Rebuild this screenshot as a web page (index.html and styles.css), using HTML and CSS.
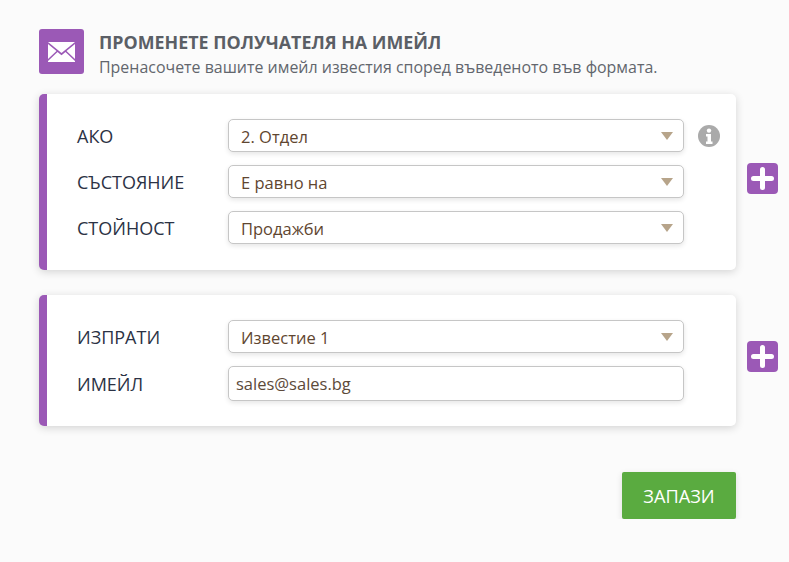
FILE: index.html
```html
<!DOCTYPE html>
<html lang="bg">
<head>
    <meta charset="UTF-8">
    <title>Промените получателя на имейл</title>
    <link rel="stylesheet" href="styles.css">
</head>
<body>
    <div class="container">
        <div class="header">
            <div class="header-icon">
                <svg width="27" height="20" viewBox="0 0 27 20">
                    <path fill="#fff" d="M0 0h27L13.5 11z"/>
                    <path fill="#fff" d="M0 2v15l8.5-8zM27 2v15l-8.5-8z"/>
                    <path fill="#fff" d="M0 20h27v-1l-9.5-9-4 3.3-4-3.3L0 19z"/>
                </svg>
            </div>
            <div>
                <h1>ПРОМЕНЕТЕ ПОЛУЧАТЕЛЯ НА ИМЕЙЛ</h1>
                <p>Пренасочете вашите имейл известия според въведеното във формата.</p>
            </div>
        </div>

        <div class="block">
            <div class="card">
                <div class="row">
                    <label>АКО</label>
                    <div class="select">2. Отдел</div>
                    <div class="info">
                        <svg width="22" height="22" viewBox="0 0 22 22">
                            <circle cx="11" cy="11" r="11" fill="#aaa"/>
                            <circle cx="11" cy="5.600" r="2.200" fill="#fff"/>
                            <path fill="#fff" d="M8 9h5v7.500h1.500V19h-6.500v-2.500h1.500v-5H8z"/>
                        </svg>
                    </div>
                </div>
                <div class="row">
                    <label>СЪСТОЯНИЕ</label>
                    <div class="select">Е равно на</div>
                </div>
                <div class="row">
                    <label>СТОЙНОСТ</label>
                    <div class="select">Продажби</div>
                </div>
            </div>
            <button class="add-btn">
                <svg width="23" height="23" viewBox="0 0 23 23">
                    <path fill="none" stroke="#fff" stroke-width="5" stroke-linecap="round" d="M11.500 2.500v18M2.500 11.500h18"/>
                </svg>
            </button>
        </div>

        <div class="block">
            <div class="card card-short">
                <div class="row">
                    <label>ИЗПРАТИ</label>
                    <div class="select">Известие 1</div>
                </div>
                <div class="row">
                    <label>ИМЕЙЛ</label>
                    <input type="text" class="text-input" value="sales@sales.bg">
                </div>
            </div>
            <button class="add-btn">
                <svg width="23" height="23" viewBox="0 0 23 23">
                    <path fill="none" stroke="#fff" stroke-width="5" stroke-linecap="round" d="M11.500 2.500v18M2.500 11.500h18"/>
                </svg>
            </button>
        </div>

        <div class="actions">
            <button class="save-btn">ЗАПАЗИ</button>
        </div>
    </div>
</body>
</html>
```

FILE: styles.css
```css
* {
    margin: 0;
    padding: 0;
    box-sizing: border-box;
}

body {
    font-family: 'Open Sans', 'Noto Sans', sans-serif;
    background: #fbfbfb;
    color: #2b3245;
}

.container {
    padding: 29px 0 0 39px;
}

.header {
    display: flex;
    gap: 15px;
    height: 45px;
    margin-bottom: 20px;
}

.header-icon {
    width: 45px;
    height: 45px;
    background: #9b59b6;
    border-radius: 3px;
    display: flex;
    align-items: center;
    justify-content: center;
}

.header h1 {
    font-size: 17.850px;
    font-weight: 700;
    line-height: 24px;
    color: #5b5f66;
    margin-top: 1px;
}

.header p {
    font-size: 15.950px;
    line-height: 22px;
    margin-top: 2px;
    color: #62666d;
}

.block {
    display: flex;
    align-items: center;
    gap: 11px;
    margin-bottom: 25px;
}

.card {
    width: 697px;
    background: #fff;
    border-left: 8px solid #9b59b6;
    border-radius: 5px;
    box-shadow: 0 2px 8px rgba(0, 0, 0, 0.16);
    padding: 25px 16px 26px 30px;
    display: flex;
    flex-direction: column;
    gap: 13px;
}

.card-short {
    padding-bottom: 25px;
}

.row {
    display: flex;
    align-items: center;
}

.row label {
    width: 151px;
    font-size: 18px;
    color: #2b3245;
}

.select {
    width: 456px;
    height: 33px;
    border: 1px solid #c6c6c6;
    border-radius: 5px;
    box-shadow: 0 2px 5px rgba(0, 0, 0, 0.1);
    background: #fff;
    color: #5f4630;
    font-size: 16.500px;
    line-height: 33px;
    padding-left: 12px;
    position: relative;
}

.select::after {
    content: "";
    position: absolute;
    right: 10px;
    top: 12px;
    border-left: 6px solid transparent;
    border-right: 6px solid transparent;
    border-top: 8px solid #b7a48a;
}

.text-input {
    width: 456px;
    height: 35px;
    border: 1px solid #c6c6c6;
    border-radius: 5px;
    box-shadow: 0 2px 5px rgba(0, 0, 0, 0.1);
    background: #fff;
    color: #5c4a3a;
    font-family: inherit;
    font-size: 16.500px;
    padding-left: 7px;
}

.info {
    margin-left: 14px;
    height: 22px;
}

.add-btn {
    width: 31px;
    height: 31px;
    background: #9b59b6;
    border: none;
    border-radius: 4px;
    margin-bottom: 8px;
    display: flex;
    align-items: center;
    justify-content: center;
}

.actions {
    width: 697px;
    display: flex;
    justify-content: flex-end;
    margin-top: 46px;
}

.save-btn {
    width: 114px;
    height: 47px;
    background: #5aab40;
    border: none;
    border-radius: 2px;
    box-shadow: 0 2px 6px rgba(0, 0, 0, 0.12);
    color: #fff;
    font-family: inherit;
    font-size: 18.200px;
}
```
